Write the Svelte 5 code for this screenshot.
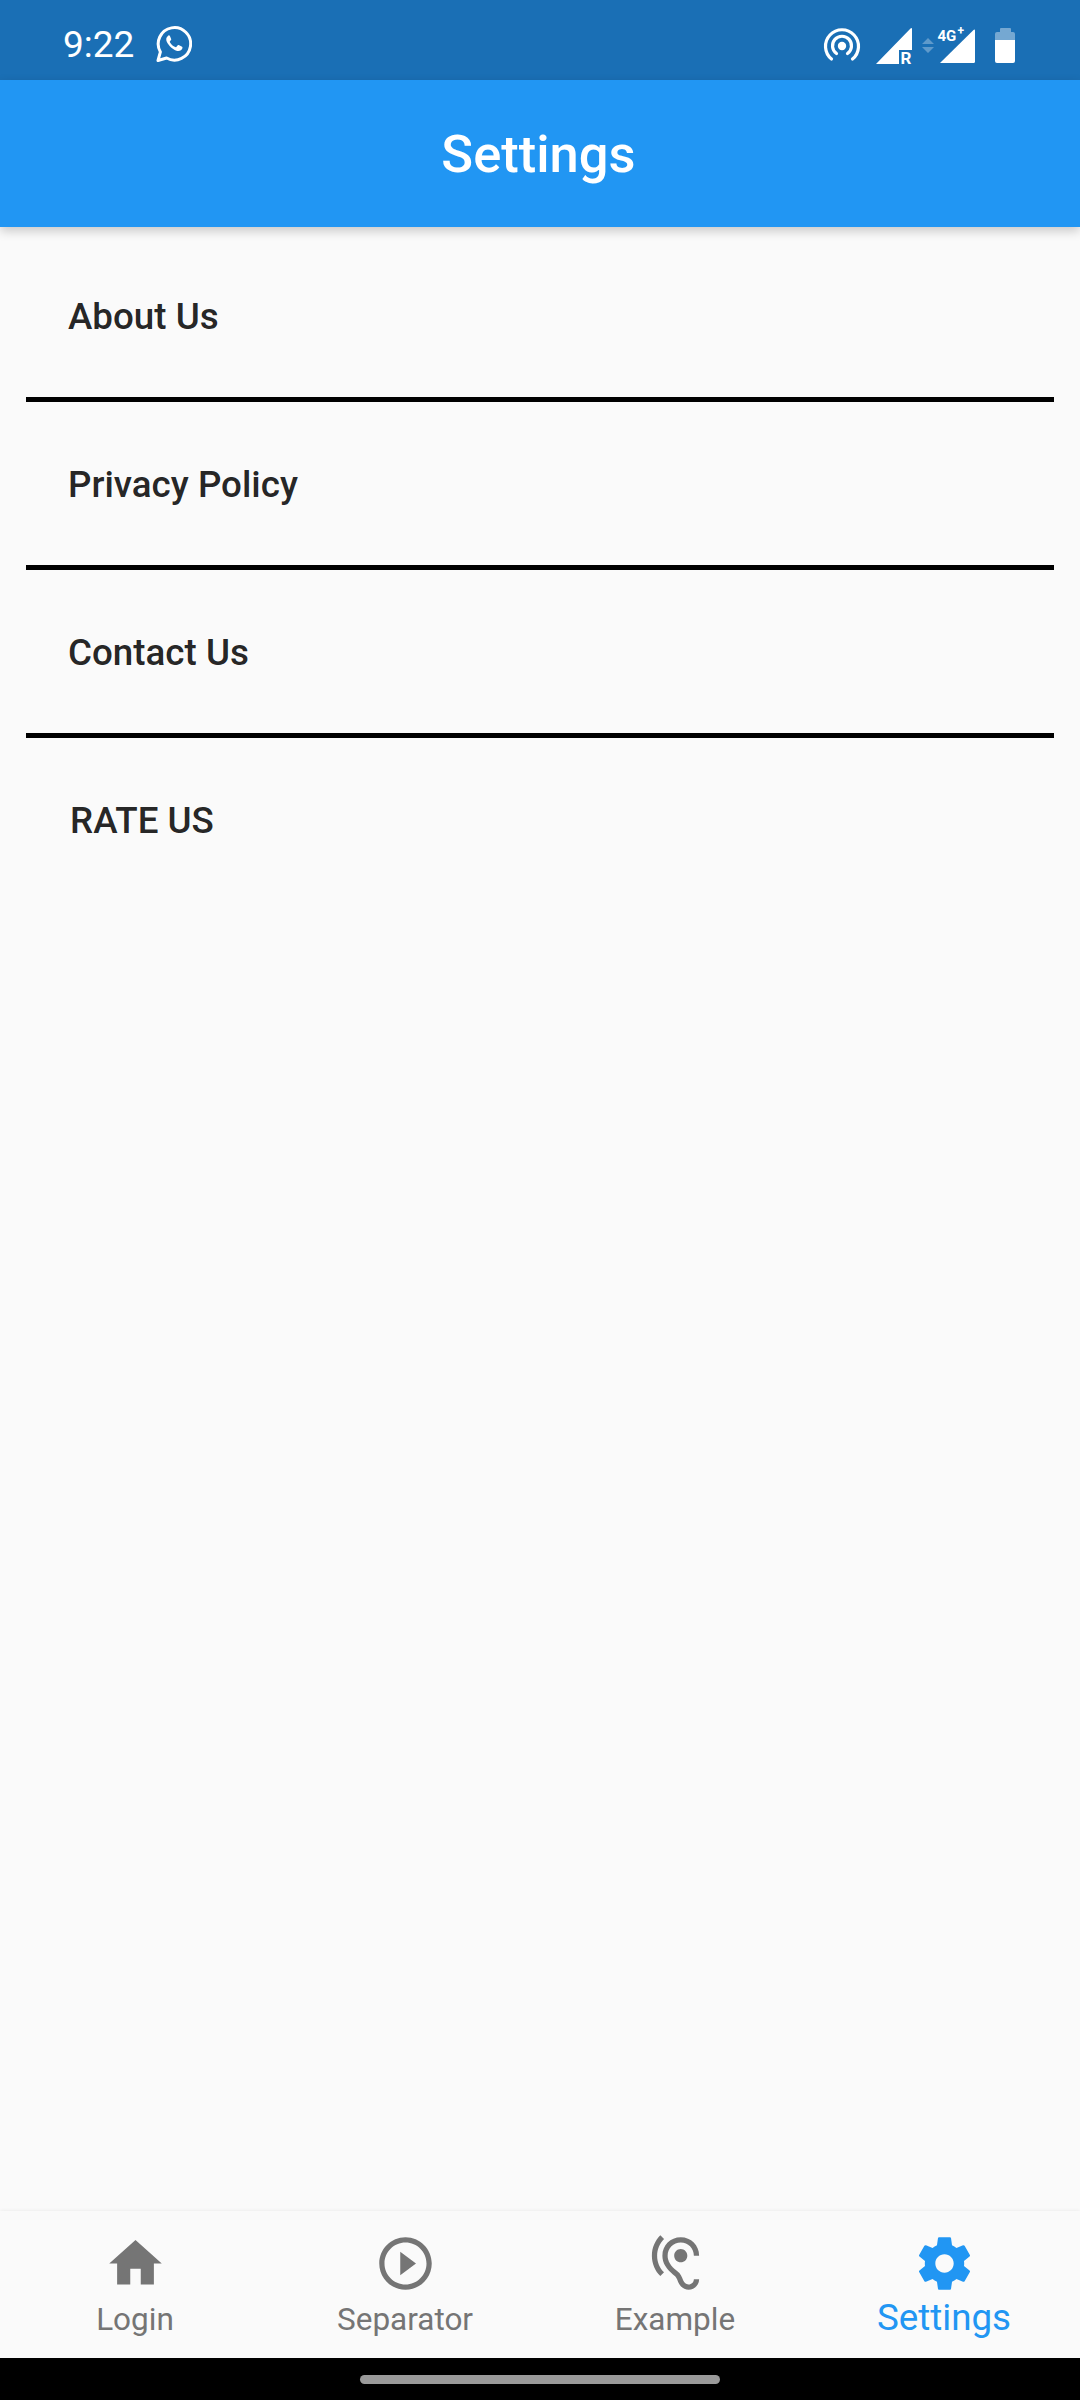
<script>
    const rows = [
        { label: 'About Us' },
        { label: 'Privacy Policy' },
        { label: 'Contact Us' },
        { label: 'RATE US', plain: true }
    ];

    const tabs = [
        { label: 'Login', path: 'M10 20v-6h4v6h5v-8h3L12 3 2 12h3v8z' },
        { label: 'Separator', path: 'M10 16.5l6-4.5-6-4.5v9zM12 2C6.48 2 2 6.48 2 12s4.48 10 10 10 10-4.48 10-10S17.52 2 12 2zm0 18c-4.41 0-8-3.59-8-8s3.59-8 8-8 8 3.59 8 8-3.59 8-8 8z' },
        { label: 'Example', path: 'M17 20c-.29 0-.56-.06-.76-.15-.71-.37-1.21-.88-1.71-2.38-.51-1.56-1.47-2.29-2.39-3-.79-.61-1.61-1.24-2.32-2.53C9.29 10.98 9 9.93 9 9c0-2.8 2.2-5 5-5s5 2.2 5 5h2c0-3.93-3.07-7-7-7S7 5.07 7 9c0 1.26.38 2.65 1.07 3.9.91 1.65 1.98 2.48 2.85 3.15.81.62 1.39 1.07 1.71 2.05.6 1.82 1.37 2.84 2.73 3.55.51.23 1.07.35 1.64.35 2.21 0 4-1.79 4-4h-2c0 1.1-.9 2-2 2zM7.64 2.64L6.22 1.22C4.23 3.21 3 5.96 3 9s1.23 5.79 3.22 7.78l1.41-1.41C6.01 13.74 5 11.49 5 9s1.01-4.74 2.64-6.36zM11.5 9c0 1.38 1.12 2.5 2.5 2.5s2.5-1.12 2.5-2.5-1.12-2.5-2.5-2.5-2.5 1.12-2.5 2.5z' },
        { label: 'Settings', active: true, path: 'M19.43 12.98c.04-.32.07-.64.07-.98s-.03-.66-.07-.98l2.11-1.65c.19-.15.24-.42.12-.64l-2-3.46c-.12-.22-.39-.3-.61-.22l-2.49 1c-.52-.4-1.08-.73-1.69-.98l-.38-2.65C14.46 2.18 14.25 2 14 2h-4c-.25 0-.46.18-.49.42l-.38 2.65c-.61.25-1.17.59-1.69.98l-2.49-1c-.23-.09-.49 0-.61.22l-2 3.46c-.13.22-.07.49.12.64l2.11 1.65c-.04.32-.07.65-.07.98s.03.66.07.98l-2.11 1.65c-.19.15-.24.42-.12.64l2 3.46c.12.22.39.3.61.22l2.49-1c.52.4 1.08.73 1.69.98l.38 2.65c.03.24.24.42.49.42h4c.25 0 .46-.18.49-.42l.38-2.65c.61-.25 1.17-.59 1.69-.98l2.49 1c.23.09.49 0 .61-.22l2-3.46c.12-.22.07-.49-.12-.64l-2.11-1.65zM12 15.5c-1.93 0-3.5-1.57-3.5-3.5s1.57-3.5 3.5-3.5 3.5 1.57 3.5 3.5-1.57 3.5-3.5 3.5z' }
    ];
</script>

<div class="screen">
    <div class="status">
        <span class="time">9:22</span>
        <svg class="wa" viewBox="0 0 36 36" width="36" height="36">
            <path d="M2 34.500l2.400-8.600A16.200 16.200 0 1 1 10.600 32z" fill="none" stroke="#fff" stroke-width="3" stroke-linejoin="round" />
            <path d="M12.600 9.600c-1.300.6-2.700 2.400-2.300 4.600.5 3 5.400 9.200 10.900 10.700 2.300.6 4.800-.8 5.200-2.600.2-.8.1-1.300-.3-1.600l-3.400-1.700c-.5-.2-.9 0-1.200.4l-1.200 1.500c-.3.3-.6.4-1 .2-2.200-.9-4.200-2.600-5.400-4.800-.2-.4-.1-.7.1-1l1-1.200c.3-.4.3-.7.2-1.100l-1.400-3.300c-.3-.6-.9-.7-1.600-.4z" fill="#fff" />
        </svg>
        <svg class="sys" viewBox="0 0 192 48" width="192" height="48">
            <circle cx="19" cy="26" r="4.200" fill="#fff" />
            <path d="M13.500 33.500a9.500 9.500 0 1 1 11 0" fill="none" stroke="#fff" stroke-width="3.200" stroke-linecap="round" />
            <path d="M8.500 39a16.500 16.500 0 1 1 21 0" fill="none" stroke="#fff" stroke-width="3.200" stroke-linecap="round" />
            <path d="M53 44L87.500 8.500q1.500-1.200 1.500.6V30H76v14z" fill="#fff" />
            <text class="r" x="77.500" y="43.500">R</text>
            <path d="M99 24l6-6 6 6zM99 27h12l-6 6z" fill="#fff" opacity=".3" />
            <path d="M117 43L150.500 10q1.500-1 1.500.6V41.500q0 1.500-1.500 1.500z" fill="#fff" />
            <text class="g" x="114.500" y="21">4G</text>
            <text class="plus" x="134.500" y="15">+</text>
            <path d="M177 12V9q0-1 1-1h9q1 0 1 1v3h2q2 0 2 2v6h-20v-6q0-2 2-2z" fill="#fff" opacity=".4" />
            <path d="M172 20h20v21q0 2-2 2h-16q-2 0-2-2z" fill="#fff" />
        </svg>
    </div>

    <header class="appbar">Settings</header>

    <main class="list">
        {#each rows as row, i}
            <div class="row" class:plain={row.plain}>{row.label}</div>
            {#if i < rows.length - 1}
                <div class="divider"></div>
            {/if}
        {/each}
    </main>

    <nav class="tabs">
        {#each tabs as tab}
            <div class="tab" class:active={tab.active}>
                <svg viewBox="0 0 24 24" width="63" height="63"><path d={tab.path} fill="currentColor" /></svg>
                <span>{tab.label}</span>
            </div>
        {/each}
    </nav>

    <div class="gesture"><div class="pill"></div></div>
</div>

<style>
    :global(body) {
        margin: 0;
        background: #fafafa;
    }

    .screen {
        width: 1080px;
        height: 2400px;
        display: flex;
        flex-direction: column;
        background: #fafafa;
        font-family: Roboto, "Liberation Sans", sans-serif;
        overflow: hidden;
    }

    .status {
        height: 80px;
        box-sizing: border-box;
        flex: none;
        display: flex;
        align-items: center;
        padding: 8px 65px 0 63px;
        background: #1a6fb5;
        color: #fff;
    }

    .time {
        font-size: 37px;
        margin-right: 22px;
    }

    .sys {
        margin-left: auto;
    }

    .r {
        font-size: 17px;
        font-weight: 700;
        fill: #fff;
    }

    .g {
        font-size: 15px;
        font-weight: 700;
        fill: #fff;
    }

    .plus {
        font-size: 12px;
        font-weight: 700;
        fill: #fff;
    }

    .appbar {
        height: 147px;
        box-sizing: border-box;
        padding-right: 3px;
        flex: none;
        display: flex;
        align-items: center;
        justify-content: center;
        background: #2196f3;
        color: #fff;
        font-size: 52.5px;
        font-weight: 500;
        box-shadow: 0 4px 10px rgba(0, 0, 0, 0.2);
        position: relative;
    }

    .list {
        flex: 1;
        padding-top: 7.4px;
    }

    .row {
        height: 168px;
        box-sizing: border-box;
        padding: 61px 0 0 68px;
        font-size: 36.75px;
        line-height: 44px;
        font-weight: 500;
        color: rgba(0, 0, 0, 0.87);
    }

    .row.plain {
        padding-left: 70px;
    }

    .divider {
        height: 5.25px;
        margin: -5.25px 26px 0 26px;
        background: #000;
    }

    .tabs {
        height: 147px;
        flex: none;
        display: grid;
        grid-template-columns: repeat(4, 1fr);
        background: #fafafa;
        box-shadow: 0 0 4px rgba(0, 0, 0, 0.08);
        position: relative;
    }

    .tab {
        display: flex;
        flex-direction: column;
        align-items: center;
        color: #757575;
        font-size: 31.5px;
        line-height: 37px;
        padding-top: 21px;
    }

    .tab svg {
        display: block;
        margin-bottom: 5.5px;
    }

    .tab.active {
        color: #2196f3;
        font-size: 36.75px;
        line-height: 37px;
        padding-right: 2px;
    }

    .tab.active svg {
        margin-bottom: 4px;
    }

    .gesture {
        height: 42px;
        flex: none;
        background: #000;
        display: flex;
        justify-content: center;
        align-items: center;
    }

    .pill {
        width: 360px;
        height: 9px;
        border-radius: 5px;
        background: #9a9a9a;
    }
</style>
